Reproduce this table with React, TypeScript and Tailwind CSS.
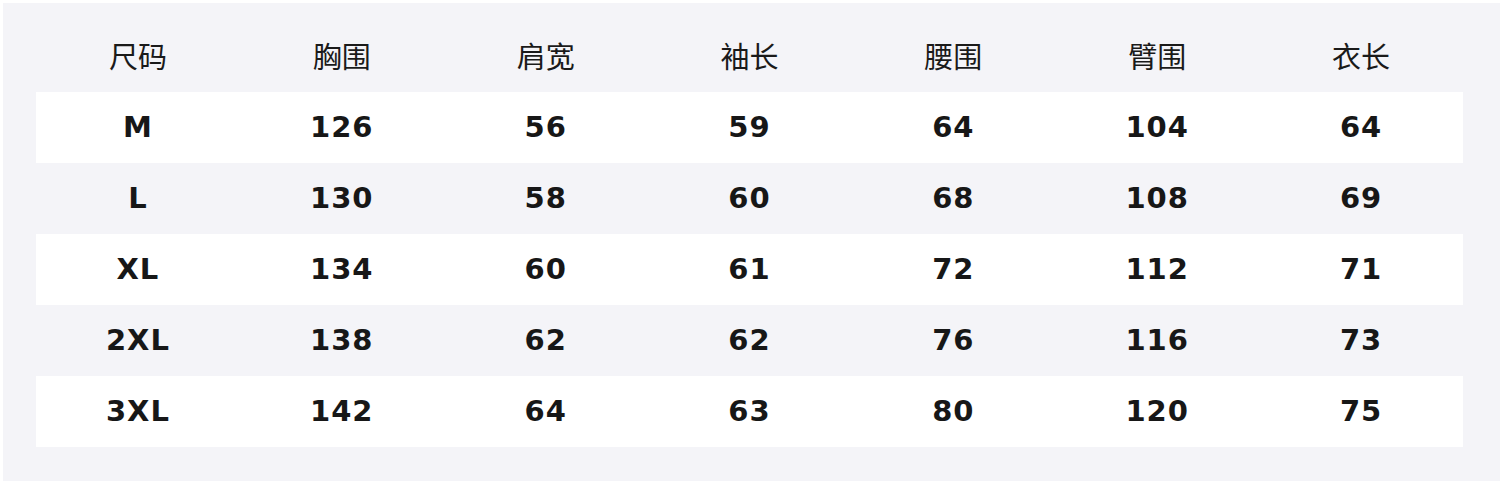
import React from 'react';

const headers = ['尺码', '胸围', '肩宽', '袖长', '腰围', '臂围', '衣长'];

const rows: (string | number)[][] = [
  ['M', 126, 56, 59, 64, 104, 64],
  ['L', 130, 58, 60, 68, 108, 69],
  ['XL', 134, 60, 61, 72, 112, 71],
  ['2XL', 138, 62, 62, 76, 116, 73],
  ['3XL', 142, 64, 63, 80, 120, 75],
];

export default function App() {
  return (
    <div className="w-[1500px] h-[484px] bg-white pl-[3px] pt-[3px] pb-[3px]">
      <div className="h-full bg-[#f4f4f8] pl-[33px] pr-[37px] pt-[16px]">
        <div className="grid grid-cols-7 h-[73px] items-center text-[29px] text-[#1a1a1a] font-['Noto_Sans_CJK_SC','Noto_Sans',sans-serif]">
          {headers.map(h => (
            <div key={h} className="text-center">{h}</div>
          ))}
        </div>
        {rows.map((row, i) => (
          <div
            key={row[0] as string}
            className={`grid grid-cols-7 h-[71px] items-center text-[29px] font-bold tracking-[1px] text-[#171717] font-['DejaVu_Sans',sans-serif] ${
              i % 2 === 0 ? 'bg-white' : ''
            }`}
          >
            {row.map((cell, j) => (
              <div key={j} className="text-center">{cell}</div>
            ))}
          </div>
        ))}
      </div>
    </div>
  );
}
